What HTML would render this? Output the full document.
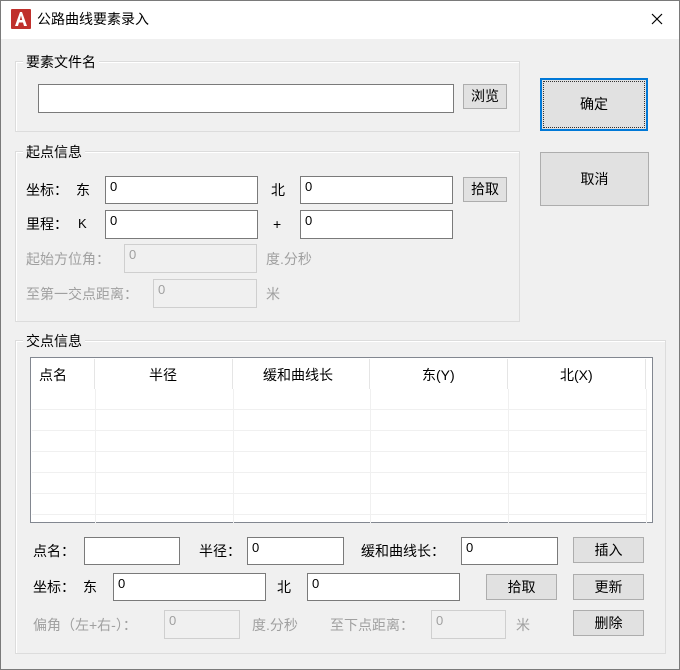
<!DOCTYPE html>
<html><head><meta charset="utf-8"><style>
*{margin:0;padding:0;box-sizing:border-box}
body{width:680px;height:670px;background:#f0f0f0;font-family:"Liberation Sans","Noto Sans CJK SC",sans-serif;font-size:14px;color:#000;position:relative;overflow:hidden}
.win{position:absolute;left:0;top:0;width:680px;height:670px;border:1px solid #7a7a7a}
.title{position:absolute;left:1px;top:1px;width:678px;height:38px;background:#fff}
.a{position:absolute;}
.grp{position:absolute;border:1px solid #dcdcdc;box-shadow:inset 1px 1px 0 #fff}
.lg{position:absolute;background:#f0f0f0;padding:0 3px;font-size:14px;line-height:16px}
.in{position:absolute;background:#fff;border:1px solid #7a7a7a;font-size:13px;padding:2px 0 0 4px;line-height:16px}
.dis{background:#f0f0f0;border-color:#cfcfcf;color:#a0a0a0}
.btn{position:absolute;background:#e1e1e1;border:1px solid #adadad;text-align:center;font-size:14px}
.t{position:absolute;font-size:14px;line-height:16px;white-space:nowrap}
.g{color:#a0a0a0}
.tb{position:absolute;left:30px;top:357px;width:623px;height:166px;background:#fff;border:1px solid #828790}
.hl{position:absolute;top:1px;width:1px;height:30px;background:#e5e5e5}
.vl{position:absolute;top:31px;width:1px;height:134px;background:#f0f0f0}
.rl{position:absolute;left:1px;width:614px;height:1px;background:#f0f0f0}
</style></head><body>
<div class="win"></div>
<div class="title"></div>
<svg class="a" style="left:11px;top:9px" width="20" height="20" viewBox="0 0 20 20"><rect width="20" height="20" fill="#c0302c" rx="1"/><path d="M4 17 L9 3 L11 3 L16 17 L13 17 L12 13.5 L8 13.5 L7 17 Z M8.8 11 L11.2 11 L10 6.5 Z" fill="#fff"/></svg>
<div class="t" style="left:37px;top:11px;font-size:14px">公路曲线要素录入</div>
<svg class="a" style="left:651px;top:13px" width="12" height="12"><path d="M1 1L11 11M11 1L1 11" stroke="#000" stroke-width="1.2"/></svg>

<div class="grp" style="left:15px;top:61px;width:505px;height:71px"></div>
<div class="lg" style="left:23px;top:54px">要素文件名</div>
<div class="in" style="left:38px;top:84px;width:416px;height:29px"></div>
<div class="btn" style="left:463px;top:84px;width:44px;height:25px;line-height:23px">浏览</div>

<div class="btn" style="left:540px;top:78px;width:108px;height:53px;line-height:49px;border:2px solid #0078d7;outline:1px dotted #333;outline-offset:-4px">确定</div>
<div class="btn" style="left:540px;top:152px;width:109px;height:54px;line-height:52px">取消</div>

<div class="grp" style="left:15px;top:151px;width:505px;height:171px"></div>
<div class="lg" style="left:23px;top:144px">起点信息</div>
<div class="t" style="left:26px;top:182px">坐标：</div><div class="t" style="left:76px;top:182px">东</div>
<div class="in" style="left:105px;top:176px;width:153px;height:28px">0</div>
<div class="t" style="left:271px;top:182px">北</div>
<div class="in" style="left:300px;top:176px;width:153px;height:28px">0</div>
<div class="btn" style="left:463px;top:177px;width:44px;height:25px;line-height:23px">拾取</div>
<div class="t" style="left:26px;top:216px">里程：</div><div class="t" style="left:78px;top:216px;font-size:13px">K</div>
<div class="in" style="left:105px;top:210px;width:153px;height:29px">0</div>
<div class="t" style="left:273px;top:216px">+</div>
<div class="in" style="left:300px;top:210px;width:153px;height:29px">0</div>
<div class="t g" style="left:26px;top:251px">起始方位角：</div>
<div class="in dis" style="left:124px;top:244px;width:133px;height:29px">0</div>
<div class="t g" style="left:266px;top:251px">度.分秒</div>
<div class="t g" style="left:26px;top:286px">至第一交点距离：</div>
<div class="in dis" style="left:153px;top:279px;width:104px;height:29px">0</div>
<div class="t g" style="left:266px;top:286px">米</div>

<div class="grp" style="left:15px;top:340px;width:651px;height:314px"></div>
<div class="lg" style="left:23px;top:333px">交点信息</div>
<div class="tb">
<div class="t" style="left:8px;top:9px">点名</div>
<div class="t" style="left:118px;top:9px">半径</div>
<div class="t" style="left:232px;top:9px">缓和曲线长</div>
<div class="t" style="left:391px;top:9px">东(Y)</div>
<div class="t" style="left:529px;top:9px">北(X)</div>
<div class="hl" style="left:63px"></div><div class="hl" style="left:201px"></div><div class="hl" style="left:338px"></div><div class="hl" style="left:476px"></div><div class="hl" style="left:614px"></div>
<div class="vl" style="left:64px"></div><div class="vl" style="left:202px"></div><div class="vl" style="left:339px"></div><div class="vl" style="left:477px"></div><div class="vl" style="left:615px"></div>
<div class="rl" style="top:51px"></div><div class="rl" style="top:72px"></div><div class="rl" style="top:93px"></div><div class="rl" style="top:114px"></div><div class="rl" style="top:135px"></div><div class="rl" style="top:156px"></div>
</div>

<div class="t" style="left:33px;top:543px">点名：</div>
<div class="in" style="left:84px;top:537px;width:96px;height:28px"></div>
<div class="t" style="left:199px;top:543px">半径：</div>
<div class="in" style="left:247px;top:537px;width:97px;height:28px">0</div>
<div class="t" style="left:361px;top:543px">缓和曲线长：</div>
<div class="in" style="left:461px;top:537px;width:97px;height:28px">0</div>
<div class="btn" style="left:573px;top:537px;width:71px;height:26px;line-height:24px">插入</div>

<div class="t" style="left:33px;top:579px">坐标：</div><div class="t" style="left:83px;top:579px">东</div>
<div class="in" style="left:113px;top:573px;width:153px;height:28px">0</div>
<div class="t" style="left:277px;top:579px">北</div>
<div class="in" style="left:307px;top:573px;width:153px;height:28px">0</div>
<div class="btn" style="left:486px;top:574px;width:71px;height:26px;line-height:24px">拾取</div>
<div class="btn" style="left:573px;top:574px;width:71px;height:26px;line-height:24px">更新</div>

<div class="t g" style="left:33px;top:617px">偏角（左+右-）：</div>
<div class="in dis" style="left:164px;top:610px;width:76px;height:29px">0</div>
<div class="t g" style="left:252px;top:617px">度.分秒</div>
<div class="t g" style="left:330px;top:617px">至下点距离：</div>
<div class="in dis" style="left:431px;top:610px;width:75px;height:29px">0</div>
<div class="t g" style="left:516px;top:617px">米</div>
<div class="btn" style="left:573px;top:610px;width:71px;height:26px;line-height:24px">删除</div>
</body></html>
